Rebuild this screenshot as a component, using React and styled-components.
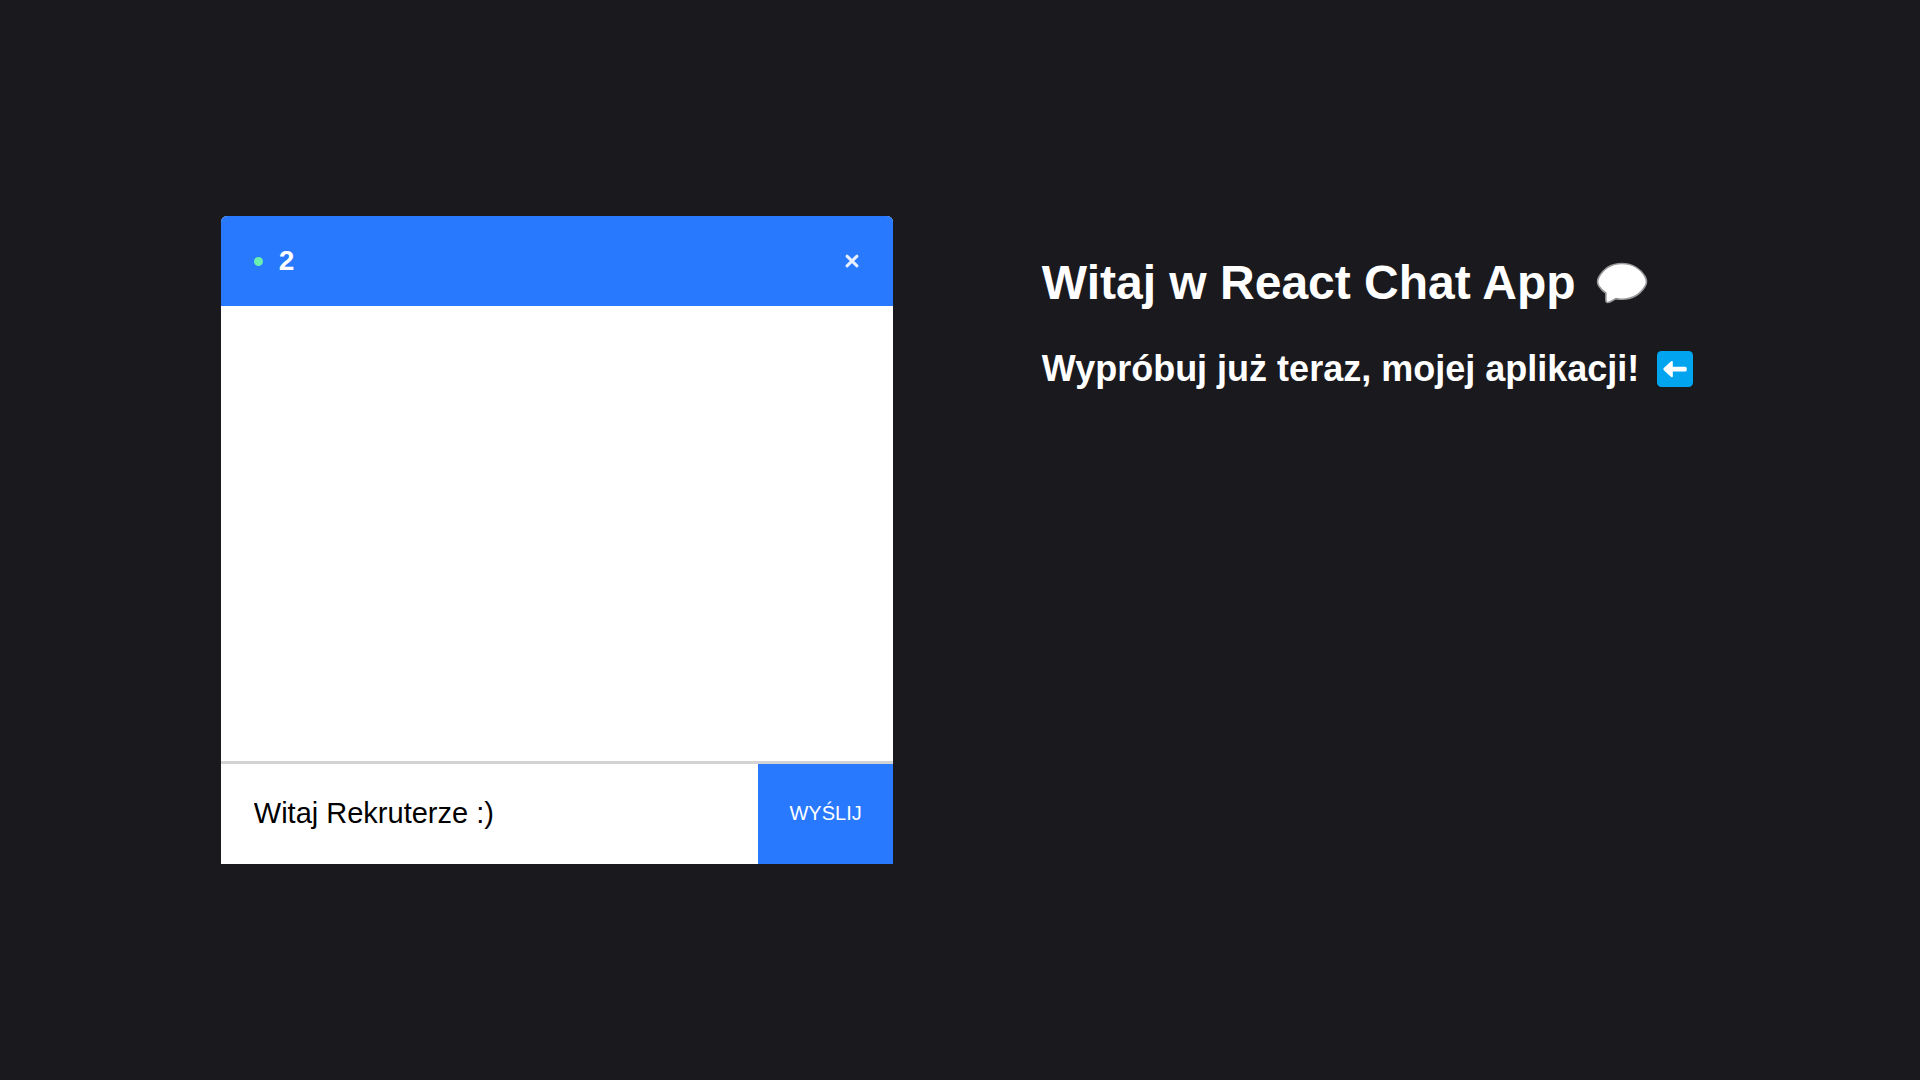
import React, { useState } from "react";
import styled, { createGlobalStyle } from "styled-components";

const GlobalStyle = createGlobalStyle`
  *, *::before, *::after { box-sizing: border-box; }
  body {
    margin: 0;
    background: #1a1a1e;
    font-family: "Liberation Sans", Arial, Helvetica, sans-serif;
  }
`;

const Page = styled.main`
  display: grid;
  grid-template-columns: 35vw minmax(0, 1fr);
  column-gap: 149px;
  align-items: center;
  min-height: 100vh;
  padding: 0 11.5vw;
`;

const ChatCard = styled.section`
  display: flex;
  flex-direction: column;
  height: 60vh;
  overflow: hidden;
  background: #ffffff;
  border-radius: 6px 6px 0 0;
`;

const ChatHeader = styled.header`
  display: flex;
  align-items: center;
  justify-content: space-between;
  flex: none;
  height: 90px;
  padding: 0 32px 0 33px;
  background: #2979ff;
  color: #ffffff;
`;

const Room = styled.div`
  display: flex;
  align-items: center;
  gap: 16px;
`;

const OnlineDot = styled.span`
  width: 9px;
  height: 9px;
  border-radius: 50%;
  background: #69f0ae;
`;

const RoomName = styled.h3`
  margin: 0;
  font-size: 28px;
  line-height: 32px;
`;

const CloseLink = styled.a`
  display: flex;
  color: #e8f0ff;
`;

const Messages = styled.div`
  flex: 1;
  overflow: auto;
`;

const MessageForm = styled.form`
  display: flex;
  flex: none;
  border-top: 3px solid #d3d3d3;
`;

const MessageInput = styled.input`
  flex: 1;
  min-width: 0;
  height: 100px;
  padding: 0 33px 2px;
  border: none;
  outline: none;
  border-radius: 0;
  background: #ffffff;
  color: #000000;
  font-family: inherit;
  font-size: 29px;
`;

const SendButton = styled.button`
  width: 20%;
  padding: 0 0 2px;
  border: none;
  background: #2979ff;
  color: #ffffff;
  font-family: inherit;
  font-size: 20px;
  text-transform: uppercase;
  cursor: pointer;
`;

const Intro = styled.section`
  display: flex;
  flex-direction: column;
  gap: 36px;
  height: 60vh;
  padding-top: 39px;
  color: #ffffff;
  white-space: nowrap;

  svg {
    flex: none;
  }
`;

const Title = styled.h1`
  display: flex;
  align-items: center;
  gap: 20px;
  margin: 0;
  font-size: 48px;
  line-height: 56px;
`;

const Subtitle = styled.h2`
  display: flex;
  align-items: center;
  gap: 18px;
  margin: 0;
  font-size: 36px;
  line-height: 44px;
`;

const CloseIcon = () => (
  <svg width="18" height="18" viewBox="0 0 18 18" aria-hidden="true">
    <path d="M4 4.200 14 13.800M14 4.200 4 13.800" stroke="currentColor" strokeWidth="3" strokeLinecap="round" />
  </svg>
);

const BubbleIcon = () => (
  <svg width="52" height="42" viewBox="0 0 52 42" aria-hidden="true">
    <path
      d="M26 1.500C37 1.500 45 7.500 49 14.500Q52 19.800 49 24.500C44 32.500 36 37.200 26 37.200C24 37.200 22 37 20 36.600C16.500 38.500 14 40.500 11.500 40.500C10 40.500 9.900 39 9.900 37.500V31C6.500 29 4.500 26.500 2.700 23.700Q0.500 19.500 2.700 15.500C7 7.500 15 1.500 26 1.500Z"
      fill="#ffffff"
      stroke="#99999b"
      strokeWidth="1.600"
      strokeLinejoin="round"
    />
  </svg>
);

const ArrowIcon = () => (
  <svg width="36" height="36" viewBox="0 0 36 36" aria-hidden="true">
    <rect width="36" height="36" rx="4.500" fill="#00a4ef" />
    <path
      d="M6.800 17 14.200 10.200Q15.800 9.300 15.800 11V15.700H28.200Q29.700 15.700 29.700 17.200V19Q29.700 20.500 28.200 20.500H15.800V25.200Q15.800 27 14.200 26L6.800 19.200Q5.800 18.100 6.800 17Z"
      fill="#ffffff"
    />
  </svg>
);

export default function App() {
  const [message, setMessage] = useState("Witaj Rekruterze :)");

  return (
    <>
      <GlobalStyle />
      <Page>
        <ChatCard>
          <ChatHeader>
            <Room>
              <OnlineDot />
              <RoomName>2</RoomName>
            </Room>
            <CloseLink href="#" aria-label="Zamknij">
              <CloseIcon />
            </CloseLink>
          </ChatHeader>
          <Messages />
          <MessageForm onSubmit={(event) => event.preventDefault()}>
            <MessageInput
              type="text"
              aria-label="Wiadomość"
              value={message}
              onChange={(event) => setMessage(event.target.value)}
            />
            <SendButton type="submit">Wyślij</SendButton>
          </MessageForm>
        </ChatCard>
        <Intro>
          <Title>
            Witaj w React Chat App
            <BubbleIcon />
          </Title>
          <Subtitle>
            Wypróbuj już teraz, mojej aplikacji!
            <ArrowIcon />
          </Subtitle>
        </Intro>
      </Page>
    </>
  );
}
